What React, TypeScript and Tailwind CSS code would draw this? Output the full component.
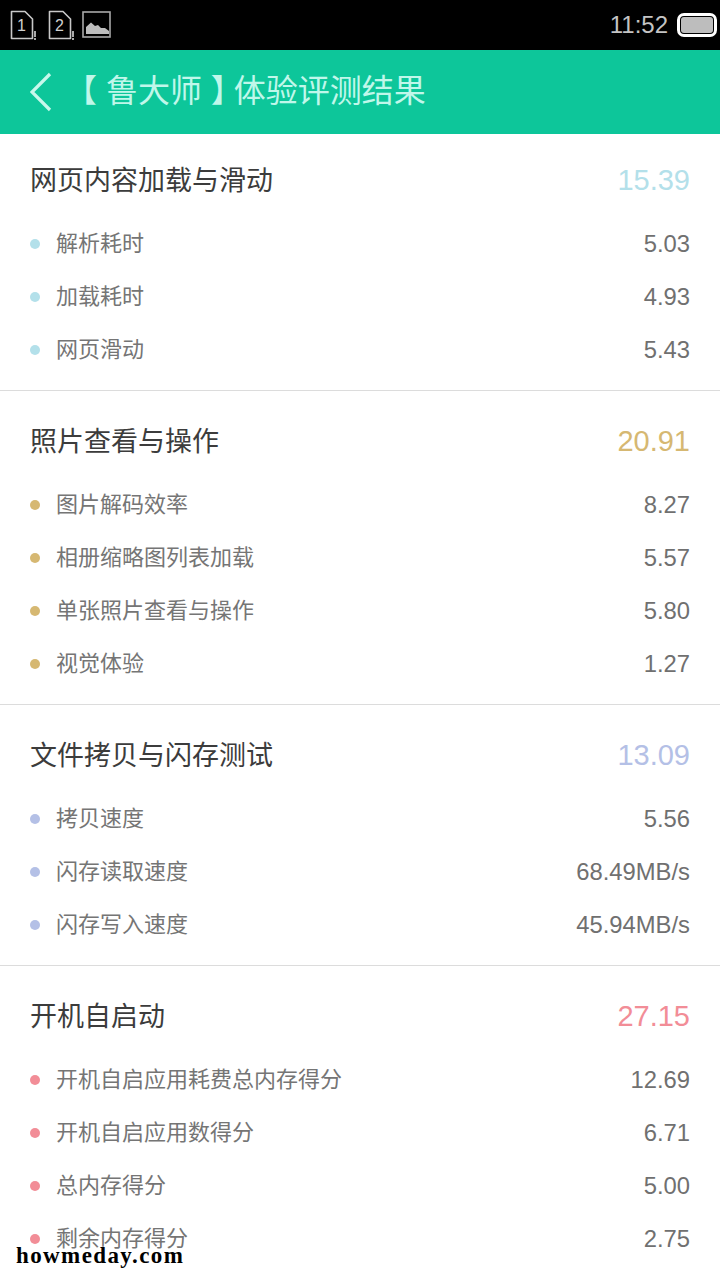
const sections = [
  {
    title: '网页内容加载与滑动',
    score: '15.39',
    scoreColor: 'text-[#b3e0ea]',
    dotColor: 'bg-[#b3e0ea]',
    spacing: 'pt-[29px]',
    rows: [
      ['解析耗时', '5.03'],
      ['加载耗时', '4.93'],
      ['网页滑动', '5.43'],
    ],
  },
  {
    title: '照片查看与操作',
    score: '20.91',
    scoreColor: 'text-[#d6b872]',
    dotColor: 'bg-[#d6b872]',
    spacing: 'pt-[33px]',
    rows: [
      ['图片解码效率', '8.27'],
      ['相册缩略图列表加载', '5.57'],
      ['单张照片查看与操作', '5.80'],
      ['视觉体验', '1.27'],
    ],
  },
  {
    title: '文件拷贝与闪存测试',
    score: '13.09',
    scoreColor: 'text-[#b4c0e6]',
    dotColor: 'bg-[#b4c0e6]',
    spacing: 'pt-[33px]',
    rows: [
      ['拷贝速度', '5.56'],
      ['闪存读取速度', '68.49MB/s'],
      ['闪存写入速度', '45.94MB/s'],
    ],
  },
  {
    title: '开机自启动',
    score: '27.15',
    scoreColor: 'text-[#f28d97]',
    dotColor: 'bg-[#f28d97]',
    spacing: 'pt-[33px]',
    rows: [
      ['开机自启应用耗费总内存得分', '12.69'],
      ['开机自启应用数得分', '6.71'],
      ['总内存得分', '5.00'],
      ['剩余内存得分', '2.75'],
    ],
  },
]

const SimIcon = ({ label }: { label: string }) => (
  <div className="relative w-[27px] h-[30px]">
    <svg className="absolute left-0 top-0" width="24" height="30" viewBox="0 0 24 30" fill="none">
      <path d="M1.5 1.5H15L22.5 9V28.5H1.5Z" stroke="#c8c8c8" strokeWidth="1.6" strokeLinejoin="round" />
    </svg>
    <span className="absolute left-[7px] top-[7px] text-[16px] leading-[18px] text-[#d0d0d0]">{label}</span>
    <span className="absolute left-[24px] top-[21px] w-[2px] h-[6px] bg-[#aaaaaa]" />
    <span className="absolute left-[24px] top-[28px] w-[2px] h-[2px] bg-[#aaaaaa]" />
  </div>
)

const App = () => {
  return (
    <div className="relative w-[720px] h-[1280px] overflow-hidden bg-white font-['Liberation_Sans','Noto_Sans_CJK_SC',sans-serif]">
      {/* Status bar */}
      <div className="h-[50px] bg-black flex items-center pl-[10px] pr-[3px]">
        <SimIcon label="1" />
        <div className="ml-[11px]">
          <SimIcon label="2" />
        </div>
        <svg className="ml-[7px]" width="30" height="28" viewBox="0 0 30 28" fill="none">
          <rect x="1" y="1" width="27" height="25" stroke="#a8a8a8" strokeWidth="1.6" />
          <path d="M4 23V16L9 11.5L13 15L16 14L19 17L23 17L27 20V23Z" fill="#bdbdbd" />
        </svg>
        <span className="ml-auto text-[24px] leading-none text-[#c4c4c4]">11:52</span>
        <div className="ml-[9px] w-[40px] h-[24px] rounded-[7px] border-[3px] border-white p-[1px]">
          <div className="w-full h-full rounded-[3px] bg-[#bdbdbd]" />
        </div>
      </div>

      {/* App bar */}
      <div className="h-[84px] bg-[#0dc69a] flex items-center pl-[30px]">
        <svg width="22" height="40" viewBox="0 0 22 40" fill="none">
          <path d="M20 2L2 20L20 38" stroke="#c8f8ec" strokeWidth="3.2" />
        </svg>
        <h1 className="ml-[13px] pb-[2px] text-[32px] leading-[40px] text-[#c0f7ea] whitespace-nowrap">
          【 鲁大师 <span className="mr-[7px] [font-feature-settings:'halt']">】</span>体验评测结果
        </h1>
      </div>

      {/* Result sections */}
      {sections.map((section) => (
        <section key={section.title} className={`${section.spacing} pb-[14px] border-b border-[#dcdcdc] last-of-type:border-b-0`}>
          <div className="flex items-center justify-between px-[30px] h-[34px] mb-[20px]">
            <h2 className="pt-[1px] text-[27px] leading-[34px] text-[#3c3c3c]">{section.title}</h2>
            <span className={`text-[29px] leading-[34px] ${section.scoreColor}`}>{section.score}</span>
          </div>
          {section.rows.map(([name, value]) => (
            <div key={name} className="flex items-center h-[53px] px-[30px]">
              <span className={`w-[10px] h-[10px] rounded-full ${section.dotColor}`} />
              <span className="ml-[16px] text-[22px] text-[#757575]">{name}</span>
              <span className="ml-auto pt-[1px] text-[23.8px] text-[#707070]">{value}</span>
            </div>
          ))}
        </section>
      ))}

      {/* Watermark */}
      <div className="absolute left-[16px] top-[1242px] font-['Liberation_Serif',serif] font-bold text-[23px] leading-[28px] tracking-[1.4px] text-black [text-shadow:0_0_2px_white]">
        howmeday.com
      </div>
    </div>
  )
}

export default App
